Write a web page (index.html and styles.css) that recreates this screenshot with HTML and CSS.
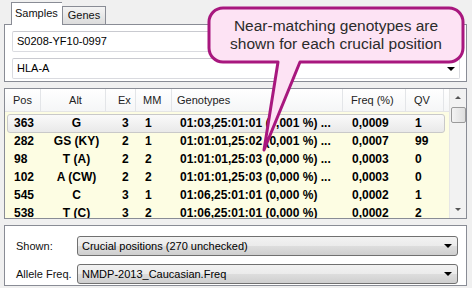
FILE: index.html
```html
<!DOCTYPE html>
<html lang="en">

<head>
  <meta charset="UTF-8" />
  <title>Crucial positions</title>
  <link rel="stylesheet" href="styles.css">
</head>

<body>
  <div class="window">
    <div class="tabs">
      <div class="tab active">Samples</div>
      <div class="tab">Genes</div>
    </div>
    <div class="panel top-panel">
      <div class="textbox">S0208-YF10-0997</div>
      <div class="textbox combo">HLA-A<span class="arrow"></span></div>
    </div>

    <div class="panel grid-panel">
      <div class="grid">
        <div class="grid-head cols">
          <div class="hc">Pos</div>
          <div class="hc center">Alt</div>
          <div class="hc pad-ex">Ex</div>
          <div class="hc">MM</div>
          <div class="hc">Genotypes</div>
          <div class="hc">Freq (%)</div>
          <div class="hc">QV</div>
        </div>
        <div class="grid-body">
          <div class="row cols selected">
            <div class="c">363</div><div class="c center">G</div><div class="c pad-ex">3</div><div class="c">1</div>
            <div class="c">01:03,25:01:01 (0,001 %) ...</div><div class="c">0,0009</div><div class="c">1</div>
          </div>
          <div class="row cols">
            <div class="c">282</div><div class="c center">GS (KY)</div><div class="c pad-ex">2</div><div class="c">1</div>
            <div class="c">01:01:01,25:02 (0,001 %) ...</div><div class="c">0,0007</div><div class="c">99</div>
          </div>
          <div class="row cols">
            <div class="c">98</div><div class="c center">T (A)</div><div class="c pad-ex">2</div><div class="c">2</div>
            <div class="c">01:01:01,25:03 (0,000 %) ...</div><div class="c">0,0003</div><div class="c">0</div>
          </div>
          <div class="row cols">
            <div class="c">102</div><div class="c center">A (CW)</div><div class="c pad-ex">2</div><div class="c">2</div>
            <div class="c">01:01:01,25:03 (0,000 %) ...</div><div class="c">0,0003</div><div class="c">0</div>
          </div>
          <div class="row cols">
            <div class="c">545</div><div class="c center">C</div><div class="c pad-ex">3</div><div class="c">1</div>
            <div class="c">01:06,25:01:01 (0,000 %)</div><div class="c">0,0002</div><div class="c">1</div>
          </div>
          <div class="row cols">
            <div class="c">538</div><div class="c center">T (C)</div><div class="c pad-ex">3</div><div class="c">2</div>
            <div class="c">01:06,25:01:01 (0,000 %)</div><div class="c">0,0002</div><div class="c">2</div>
          </div>
        </div>
      </div>
      <div class="scrollbar">
        <span class="sb-up"></span>
        <span class="sb-thumb"></span>
        <span class="sb-down"></span>
      </div>
    </div>

    <div class="panel bottom-panel">
      <div class="field">
        <span class="field-label">Shown:</span>
        <div class="dropdown">Crucial positions (270 unchecked)<span class="arrow"></span></div>
      </div>
      <div class="field">
        <span class="field-label">Allele Freq.</span>
        <div class="dropdown">NMDP-2013_Caucasian.Freq<span class="arrow"></span></div>
      </div>
    </div>
  </div>

  <!-- callout over the window -->
  <div class="callout">
    <svg class="callout-shape" width="472" height="288" viewBox="0 0 472 288">
      <path d="M223 8 H449 A14 14 0 0 1 463 22 V48 A14 14 0 0 1 449 62 H300 L264 150 L278 62 H223 A14 14 0 0 1 209 48 V22 A14 14 0 0 1 223 8 Z"
        fill="#fde3f4" stroke="#a8177e" stroke-width="3" stroke-linejoin="round" />
    </svg>
    <div class="callout-text">Near-matching genotypes are<br>shown for each crucial position</div>
  </div>
</body>

</html>
```

FILE: styles.css
```css
html,
body {
  margin: 0;
  height: 100%;
  overflow: hidden;
}

body {
  background-color: #f0f0f0;
  font-family: "Liberation Sans", Arial, sans-serif;
  font-size: 11px;
  color: #000;
}

.window {
  padding: 0 5px 0 4px;
}

.tabs {
  display: flex;
  align-items: flex-end;
  height: 24px;
  padding-left: 7px;
}

.tab {
  height: 17px;
  line-height: 17px;
  padding: 0 5px;
  border: 1px solid #898c95;
  border-bottom: none;
  background: linear-gradient(#f4f4f4, #dcdcdc);
  color: #111;
}

.tab.active {
  position: relative;
  z-index: 1;
  height: 22px;
  line-height: 20px;
  margin-bottom: -1px;
  padding: 0 4px 0 3px;
  background: #fff;
  border-right: none;
}

.panel {
  border: 1px solid #898c95;
  background: #fff;
}

.top-panel {
  padding: 6px 6px 2px 7px;
}

.textbox {
  box-sizing: border-box;
  height: 21px;
  line-height: 19px;
  padding: 0 4px;
  border: 1px solid #dadbe0;
  border-top-color: #c9cad0;
  border-radius: 2px;
}

.combo {
  margin-top: 6px;
  display: flex;
  justify-content: space-between;
  align-items: center;
  padding-right: 4px;
}

.arrow {
  width: 0;
  height: 0;
  border-left: 4px solid transparent;
  border-right: 4px solid transparent;
  border-top: 4px solid #000;
}

/* grid */
.grid-panel {
  margin-top: 6px;
  display: flex;
  height: 129px;
  overflow: hidden;
}

.grid {
  flex: 1;
  background: #fdfde3;
}

.cols {
  display: grid;
  grid-template-columns: 36px 65px 30px 36px 171px 63px 38px;
}

.grid-head {
  height: 22px;
  background: linear-gradient(#ffffff, #f5f6f7);
  border-bottom: 1px solid #e5e5e5;
  color: #222;
}

.hc {
  line-height: 22px;
  padding-left: 8px;
  border-right: 1px solid #e3e5e8;
  white-space: nowrap;
}

.hc:nth-child(2) {
  padding-left: 5px;
}

.hc:nth-child(4) {
  padding-left: 7px;
}

.hc:nth-child(5) {
  padding-left: 5px;
}

.center {
  text-align: center;
  padding-left: 0;
}

.pad-ex {
  padding-left: 12px;
}

.grid-body {
  padding-top: 2px;
}

.row {
  height: 17px;
  line-height: 17px;
  margin-left: 2px;
  width: 436px;
  border: 1px solid transparent;
  margin-top: -1px;
  font-weight: bold;
  font-size: 12px;
}

.row:first-child {
  margin-top: 0;
}

.row.selected {
  border-color: #c9c9c9;
  border-radius: 3px;
  background: linear-gradient(#fafafa, #e9e9e9);
}

.row .c {
  padding-left: 6px;
  white-space: nowrap;
}

.row .c:nth-child(2) {
  padding-left: 0;
}

.row .c:nth-child(3) {
  padding-left: 13px;
}

.row .c:nth-child(5) {
  padding-left: 5px;
}

/* scrollbar */
.scrollbar {
  width: 16px;
  background: #f2f2f2;
  border-left: 1px solid #e6e6e6;
  display: flex;
  flex-direction: column;
  align-items: center;
}

.sb-up,
.sb-down {
  width: 0;
  height: 0;
  border-left: 3px solid transparent;
  border-right: 3px solid transparent;
}

.sb-up {
  margin-top: 7px;
  border-bottom: 3px solid #555;
}

.sb-down {
  margin-top: auto;
  margin-bottom: 7px;
  border-top: 3px solid #555;
}

.sb-thumb {
  box-sizing: border-box;
  width: 15px;
  height: 16px;
  margin-top: 8px;
  border: 1px solid #9a9a9a;
  border-radius: 2px;
  background: linear-gradient(90deg, #f3f3f3, #dedede);
}

/* bottom panel */
.bottom-panel {
  margin-top: 6px;
  padding: 10px 8px 1px 11px;
}

.field {
  display: flex;
  align-items: center;
  margin-bottom: 8px;
}

.field:last-child {
  margin-bottom: 0;
}

.field-label {
  width: 61px;
  color: #111;
}

.dropdown {
  box-sizing: border-box;
  flex: 1;
  height: 20px;
  display: flex;
  justify-content: space-between;
  align-items: center;
  padding: 0 5px 0 4px;
  border: 1px solid #707070;
  border-radius: 3px;
  background: linear-gradient(#f2f2f2 0%, #ebebeb 50%, #dddddd 51%, #cfcfcf 100%);
}

/* callout */
.callout {
  position: absolute;
  left: 0;
  top: 0;
  width: 472px;
  height: 288px;
  pointer-events: none;
}

.callout-shape {
  position: absolute;
  left: 0;
  top: 0;
}

.callout-text {
  position: absolute;
  left: 209px;
  top: 8px;
  width: 254px;
  height: 54px;
  display: flex;
  align-items: center;
  justify-content: center;
  text-align: center;
  font-size: 15.5px;
  line-height: 18px;
  color: #2b2b2b;
}
```
